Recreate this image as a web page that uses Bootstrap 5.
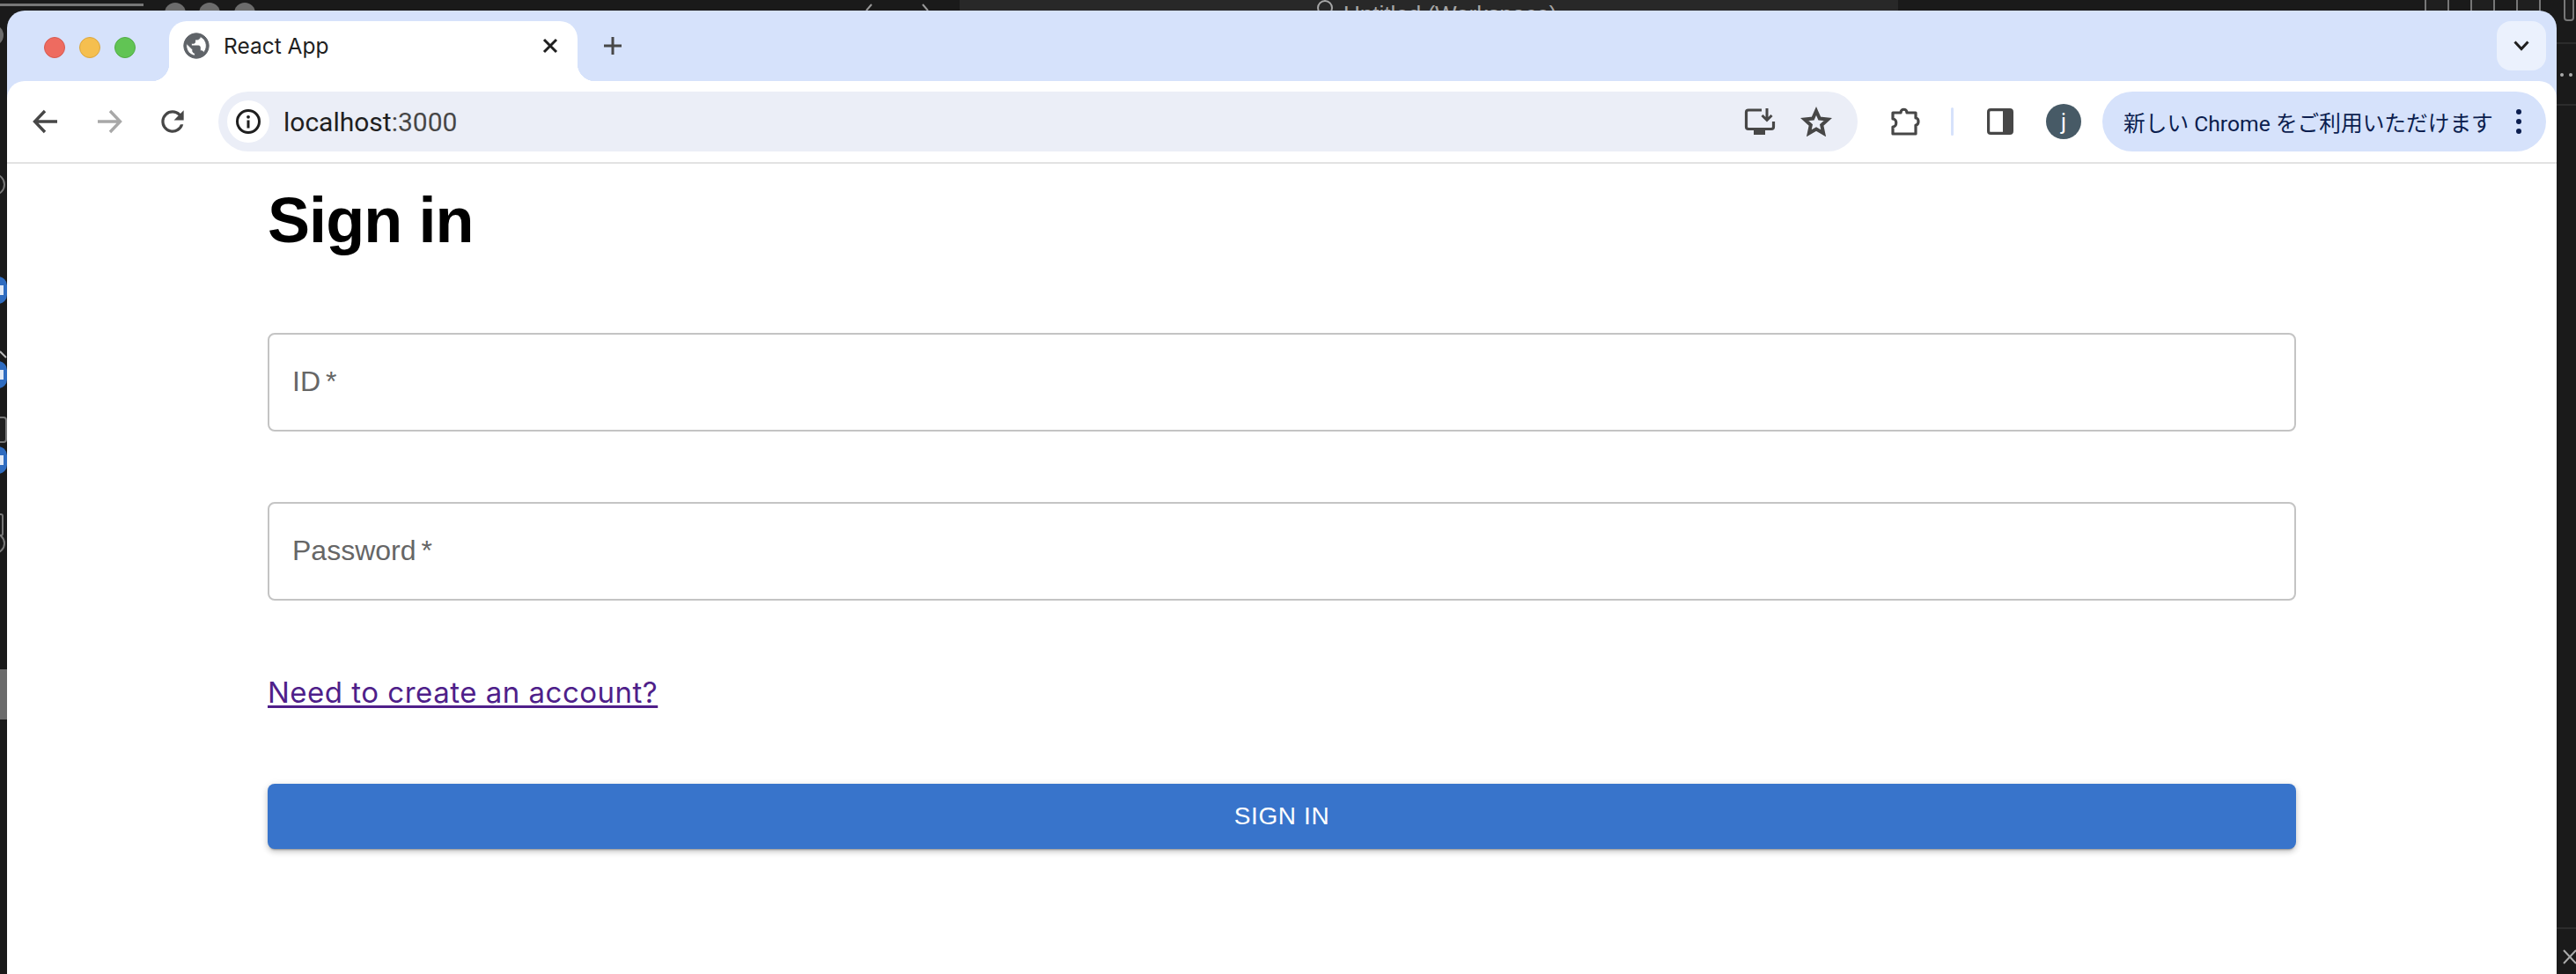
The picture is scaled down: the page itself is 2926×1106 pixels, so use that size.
<!DOCTYPE html>
<html lang="ja">
  <head>
    <meta charset="UTF-8" />
    <title>React App</title>
    <link href="https://cdn.jsdelivr.net/npm/bootstrap@5.3.2/dist/css/bootstrap.min.css" rel="stylesheet" />
    <style>
      html, body { height: 100%; }
      body {
        background: #1a1a1a;
        overflow: hidden;
        font-family: "Liberation Sans", Arial, sans-serif;
      }

      /* editor windows behind the browser */
      .desk { position: absolute; inset: 0; overflow: hidden; }
      .desk-item { position: absolute; }
      .desk-topbar { left: 1090px; top: 0; width: 1066px; height: 12px; background: #282828; }
      .desk-title {
        left: 1526px; top: 0; height: 12px; overflow: hidden;
        color: #a6a6a6; font: 26px/32px "Liberation Sans", sans-serif; white-space: nowrap;
      }
      .desk-dot { border-radius: 50%; background: #6c6c6c; }
      .desk-badge {
        left: -20px; width: 28px; height: 31px; border-radius: 10px; background: #2f6cc0;
      }
      .desk-badge::after {
        content: ""; position: absolute; right: 4px; top: 10px; width: 4px; height: 11px; background: #dfe8f5;
      }
      .desk-line { background: #2c2c2c; height: 2px; }
      .desk-frame { border: 2px solid #777; border-radius: 4px; background: #1f1f1f; }

      .browser-win {
        position: relative;
        margin: 12px 22px 0 8px;
        height: 1094px;
        background: #d6e2fb;
        border-radius: 20px 20px 0 0;
        overflow: hidden;
      }

      .tabstrip { height: 80px; }
      .traffic { width: 184px; padding-left: 42px; gap: 16px; padding-top: 3px; }
      .traffic i { width: 24px; height: 24px; border-radius: 50%; display: block; border: 1px solid; }
      .t-red { background: #ee6b60; border-color: #d65a50 !important; }
      .t-amber { background: #f5bf4f; border-color: #dba63e !important; }
      .t-green { background: #61c454; border-color: #51ac45 !important; }

      .browser-tab {
        position: relative;
        width: 464px;
        height: 68px;
        margin-top: 12px;
        padding: 0 14px 12px 14px;
        background: #fff;
        border-radius: 20px 20px 0 0;
        color: #1f1f1f;
      }
      .browser-tab::before, .browser-tab::after {
        content: "";
        position: absolute;
        bottom: 0;
        width: 20px;
        height: 20px;
      }
      .browser-tab::before { left: -20px; background: radial-gradient(circle at 0 0, transparent 20px, #fff 20.5px); }
      .browser-tab::after { right: -20px; background: radial-gradient(circle at 100% 0, transparent 20px, #fff 20.5px); }
      .tab-title { margin-left: 14px; font: 24.5px "Inter", "Liberation Sans", sans-serif; }
      .new-tab { margin-left: 20px; width: 40px; }
      .tab-search {
        width: 56px; height: 56px; margin: 12px 12px 0 0;
        background: #ebf1fd; border-radius: 16px;
      }

      .toolbar {
        height: 92px;
        background: #fff;
        border-radius: 20px 20px 0 0;
        padding: 0 12px 0 8px;
      }
      .tool-slot { width: 72px; height: 60px; flex: none; }
      .omnibox {
        height: 68px;
        margin-left: 16px;
        background: #ebeef7;
        border-radius: 34px;
        padding: 0 15px 0 10px;
        min-width: 0;
      }
      .site-info { width: 48px; height: 48px; background: #fff; border-radius: 50%; flex: none; }
      .omni-url { margin-left: 16px; font: 30px "Roboto", "Liberation Sans", sans-serif; color: #1f1f1f; }
      .omni-url span { color: #474747; }
      .omni-slot { width: 64px; height: 60px; flex: none; }
      .ext-slot { width: 56px; height: 60px; flex: none; margin-left: 25px; }
      .ext-first { margin-left: 27px; }
      .tool-sep { width: 3px; height: 32px; background: #d6e2fb; border-radius: 2px; margin-left: 23px; flex: none; }
      .avatar-j {
        width: 40px; height: 40px; margin: 0 24px;
        background: #475a66; color: #fff; border-radius: 50%; flex: none;
        font: 25px "Roboto", sans-serif;
      }
      .update-pill {
        width: 504px; height: 68px; flex: none;
        background: #d6e2fb; color: #0c1e4f;
        border-radius: 34px;
        padding: 0 14px 0 24px;
        font: 24.7px "Roboto", "Noto Sans CJK JP", sans-serif;
        white-space: nowrap;
      }
      .chrome-rule { height: 2px; background: #e2e2e2; }

      .signin-page { background: #fff; height: 920px; padding: 0 296px; }
      .signin-title {
        margin: 0;
        padding-top: 18px;
        font: 700 72px/92px "Liberation Sans", sans-serif;
        letter-spacing: -0.9px;
        color: #000;
      }
      .field-box { position: relative; height: 112px; margin-top: 82px; }
      .field-box + .field-box { margin-top: 80px; }
      .field-box .form-control {
        height: 100%;
        border: 2px solid #c4c4c4;
        border-radius: 8px;
        box-shadow: none;
      }
      .field-label {
        position: absolute;
        left: 28px;
        top: 33px;
        margin: 0;
        font-size: 32px;
        line-height: 44px;
        color: #666;
        pointer-events: none;
      }
      .field-label span { margin-left: 6px; }
      .signup-link {
        display: inline-block;
        margin-top: 82px;
        font: 33px/44px "Inter", "Liberation Sans", sans-serif;
        letter-spacing: 0.5px;
        color: #4f1f8a;
        text-decoration-thickness: 3px;
        text-underline-offset: 3px;
      }
      .signin-btn {
        display: block;
        margin-top: 82px;
        height: 74px;
        background: #3874cb;
        border: 0;
        border-radius: 8px;
        color: #fff;
        font: 500 28px "Liberation Sans", sans-serif;
        letter-spacing: 0.6px;
        box-shadow: 0 3px 2px -2px rgba(0,0,0,.3), 0 3px 6px rgba(0,0,0,.16), 0 2px 10px rgba(0,0,0,.1);
      }
    </style>
  </head>
  <body>
    <div class="desk">
      <div class="desk-item desk-line" style="left:0;top:4px;width:163px;height:3px;background:#777"></div>
      <div class="desk-item desk-dot" style="left:187px;top:3px;width:24px;height:24px"></div>
      <div class="desk-item desk-dot" style="left:226px;top:3px;width:24px;height:24px"></div>
      <div class="desk-item desk-dot" style="left:266px;top:3px;width:24px;height:24px"></div>
      <div class="desk-item desk-dot" style="left:-20px;top:28px;width:24px;height:24px"></div>
      <div class="desk-item desk-topbar"></div>
      <svg class="desk-item" style="left:980px;top:0" width="80" height="12" viewBox="0 0 80 12" fill="none">
        <path d="M10 5 L4 12 M68 5 L74 12" stroke="#999" stroke-width="2" />
      </svg>
      <div class="desk-item" style="left:1496px;top:0;width:18px;height:18px;border:2px solid #a6a6a6;border-radius:50%"></div>
      <div class="desk-item desk-title">Untitled (Workspace)</div>
      <div class="desk-item" style="left:-18px;top:197px;width:24px;height:25px;border:2px solid #777;border-radius:50%"></div>
      <div class="desk-item desk-badge" style="top:314px"></div>
      <svg class="desk-item" style="left:0;top:398px" width="8" height="12" viewBox="0 0 8 12" fill="none">
        <path d="M0 1 L7 8" stroke="#bbb" stroke-width="2" />
      </svg>
      <div class="desk-item desk-badge" style="top:410px"></div>
      <div class="desk-item desk-frame" style="left:-18px;top:473px;width:26px;height:30px"></div>
      <div class="desk-item desk-badge" style="top:507px"></div>
      <div class="desk-item" style="left:-18px;top:583px;width:22px;height:26px;border:2px solid #777;border-radius:3px"></div>
      <div class="desk-item" style="left:-18px;top:605px;width:24px;height:24px;border:2px solid #777;border-radius:50%"></div>
      <div class="desk-item" style="left:0;top:760px;width:8px;height:57px;background:#6b6b6b"></div>
      <div class="desk-item desk-frame" style="left:2754px;top:-6px;width:28px;height:30px"></div>
      <div class="desk-item desk-frame" style="left:2806px;top:-6px;width:28px;height:30px"></div>
      <div class="desk-item desk-frame" style="left:2858px;top:-6px;width:28px;height:30px"></div>
      <div class="desk-item desk-frame" style="left:2912px;top:-6px;width:12px;height:30px"></div>
      <div class="desk-item desk-line" style="left:2904px;top:48px;width:22px"></div>
      <div class="desk-item desk-line" style="left:2904px;top:118px;width:22px"></div>
      <div class="desk-item desk-dot" style="left:2908px;top:83px;width:4px;height:4px;background:#aaa"></div>
      <div class="desk-item desk-dot" style="left:2918px;top:83px;width:4px;height:4px;background:#aaa"></div>
      <div class="desk-item desk-line" style="left:2904px;top:1053px;width:22px"></div>
      <svg class="desk-item" style="left:2911px;top:1078px" width="15" height="18" viewBox="0 0 15 18">
        <path d="M1 1 L15 16 M15 1 L1 16" stroke="#aaa" stroke-width="2" fill="none" />
      </svg>
    </div>

    <div class="browser-win">
      <div class="tabstrip d-flex">
        <div class="traffic d-flex align-items-center">
          <i class="t-red"></i><i class="t-amber"></i><i class="t-green"></i>
        </div>
        <div class="browser-tab d-flex align-items-center">
          <svg width="34" height="34" viewBox="0 0 24 24" fill="#5f6368" stroke="#5f6368" stroke-width=".7">
            <path d="M12 2C6.48 2 2 6.48 2 12s4.48 10 10 10 10-4.48 10-10S17.52 2 12 2zm-1 17.93c-3.95-.49-7-3.85-7-7.93 0-.62.08-1.21.21-1.79L9 15v1c0 1.1.9 2 2 2v1.93zm6.9-2.54c-.26-.81-1-1.39-1.9-1.39h-1v-3c0-.55-.45-1-1-1H8v-2h2c.55 0 1-.45 1-1V7h2c1.1 0 2-.9 2-2v-.41c2.93 1.19 5 4.06 5 7.41 0 2.08-.8 3.97-2.1 5.39z" />
          </svg>
          <span class="tab-title">React App</span>
          <svg class="ms-auto" style="margin-right:8px" width="18" height="18" viewBox="0 0 18 18">
            <path d="M2 2 L16 16 M16 2 L2 16" stroke="#1f1f1f" stroke-width="3" fill="none" />
          </svg>
        </div>
        <div class="new-tab d-flex align-items-center justify-content-center">
          <svg width="22" height="22" viewBox="0 0 22 22">
            <path d="M11 1 V21 M1 11 H21" stroke="#474747" stroke-width="3" fill="none" />
          </svg>
        </div>
        <div class="tab-search ms-auto d-flex align-items-center justify-content-center">
          <svg width="18" height="12" viewBox="0 0 18 12">
            <path d="M1.5 1.5 L9 9.5 L16.5 1.5" stroke="#1f1f1f" stroke-width="3" fill="none" />
          </svg>
        </div>
      </div>

      <div class="toolbar d-flex align-items-center">
        <div class="tool-slot d-flex align-items-center justify-content-center">
          <svg width="30" height="28" viewBox="0 0 30 28">
            <path d="M14 2 L2.5 14 L14 26 M3 14 H28" stroke="#474747" stroke-width="3.4" fill="none" />
          </svg>
        </div>
        <div class="tool-slot d-flex align-items-center justify-content-center">
          <svg width="30" height="28" viewBox="0 0 30 28">
            <path d="M16 2 L27.5 14 L16 26 M27 14 H2" stroke="#a8a8a8" stroke-width="3.4" fill="none" />
          </svg>
        </div>
        <div class="tool-slot d-flex align-items-center justify-content-center">
          <svg width="38" height="38" viewBox="0 0 24 24" fill="#474747">
            <path d="M17.65 6.35A7.95 7.95 0 0 0 12 4a8 8 0 1 0 7.73 10h-2.08A6 6 0 1 1 12 6c1.66 0 3.14.69 4.22 1.78L13 11h7V4l-2.35 2.35z" />
          </svg>
        </div>
        <div class="omnibox flex-grow-1 d-flex align-items-center">
          <div class="site-info d-flex align-items-center justify-content-center">
            <svg width="30" height="30" viewBox="0 0 30 30">
              <circle cx="15" cy="15" r="12.5" stroke="#1f1f1f" stroke-width="3" fill="none" />
              <rect x="13.5" y="13.5" width="3" height="9" fill="#1f1f1f" />
              <circle cx="15" cy="9.8" r="1.9" fill="#1f1f1f" />
            </svg>
          </div>
          <div class="omni-url">localhost<span>:3000</span></div>
          <div class="omni-slot ms-auto d-flex align-items-center justify-content-center">
            <svg width="36" height="32" viewBox="0 0 36 32" fill="none">
              <path d="M20 3 H5 Q2.5 3 2.5 5.5 V22 Q2.5 24.5 5 24.5 H31 Q33.5 24.5 33.5 22 V16" stroke="#474747" stroke-width="3.2" />
              <path d="M26 1 V14 M20.5 9 L26 14.5 L31.5 9" stroke="#474747" stroke-width="3" />
              <rect x="11" y="25" width="13" height="6" fill="#474747" />
            </svg>
          </div>
          <div class="omni-slot d-flex align-items-center justify-content-center">
            <svg width="36" height="34" viewBox="0 0 36 34" fill="none">
              <path d="M18 5 L21.8 13.6 L31.3 14.6 L24.2 21 L26.2 30.3 L18 25.5 L9.8 30.3 L11.8 21 L4.7 14.6 L14.2 13.6 Z" stroke="#474747" stroke-width="4" stroke-linejoin="miter" />
            </svg>
          </div>
        </div>
        <div class="ext-slot ext-first d-flex align-items-center justify-content-center">
          <svg width="36" height="34" viewBox="0 0 36 34" fill="none">
            <path d="M3 7 H12 C12 2 19 2 19 7 H29 V13 C33 13 33 21 29 21 V31 H3 V23 C8 23 8 14 3 14 Z" stroke="#474747" stroke-width="3.2" stroke-linejoin="round" />
          </svg>
        </div>
        <div class="tool-sep"></div>
        <div class="ext-slot d-flex align-items-center justify-content-center">
          <svg width="30" height="30" viewBox="0 0 30 30">
            <rect x="1.6" y="1.6" width="26.8" height="26.8" rx="2.5" fill="none" stroke="#474747" stroke-width="3.2" />
            <rect x="18" y="2" width="10" height="26" fill="#474747" />
          </svg>
        </div>
        <div class="avatar-j d-flex align-items-center justify-content-center">j</div>
        <div class="update-pill d-flex align-items-center">
          <span>新しい Chrome をご利用いただけます</span>
          <svg class="ms-auto" style="margin-right:12px" width="10" height="30" viewBox="0 0 10 30" fill="#0c1e4f">
            <circle cx="5" cy="4" r="3" /><circle cx="5" cy="15" r="3" /><circle cx="5" cy="26" r="3" />
          </svg>
        </div>
      </div>
      <div class="chrome-rule"></div>

      <div class="signin-page">
        <h1 class="signin-title">Sign in</h1>
        <form>
          <div class="field-box">
            <input type="text" class="form-control" id="userId" />
            <label class="field-label" for="userId">ID<span>*</span></label>
          </div>
          <div class="field-box">
            <input type="password" class="form-control" id="userPass" />
            <label class="field-label" for="userPass">Password<span>*</span></label>
          </div>
          <a class="signup-link" href="#">Need to create an account?</a>
          <button type="button" class="btn signin-btn w-100">SIGN IN</button>
        </form>
      </div>
    </div>

    <script src="https://cdn.jsdelivr.net/npm/bootstrap@5.3.2/dist/js/bootstrap.bundle.min.js"></script>
  </body>
</html>
